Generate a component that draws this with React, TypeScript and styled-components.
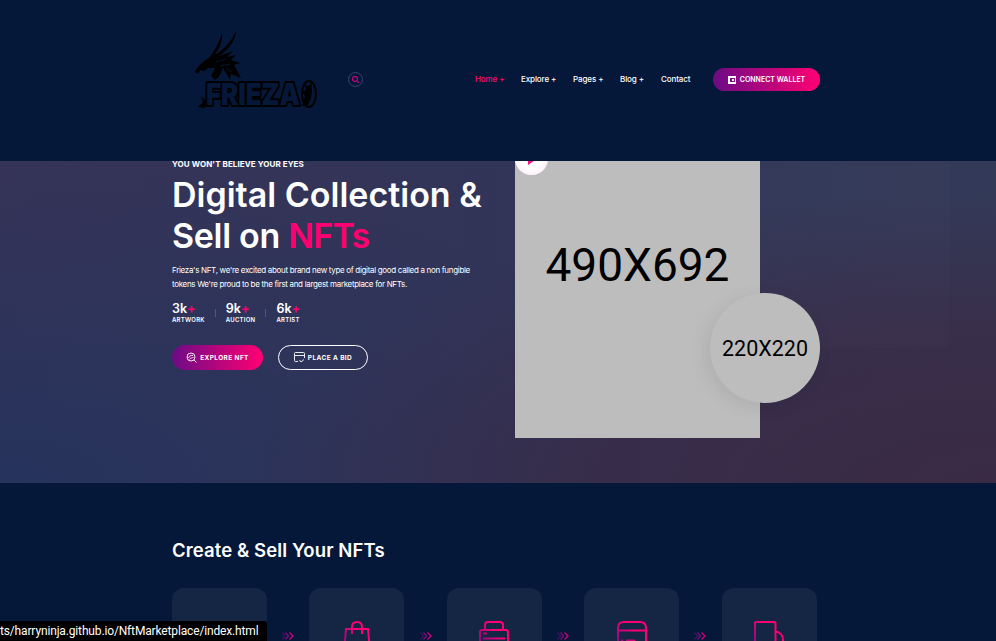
import styled, { createGlobalStyle } from 'styled-components'

const GlobalStyle = createGlobalStyle`
  html, body {
    margin: 0;
    height: 100%;
    overflow: hidden;
    background: #06183a;
    font-family: Inter, "Liberation Sans", sans-serif;
    color: #fff;
  }
`

const navLinks = [
  { label: 'Home +', active: true, width: 29 },
  { label: 'Explore +', width: 35 },
  { label: 'Pages +', width: 30 },
  { label: 'Blog +', width: 24 },
  { label: 'Contact', width: 28 },
]

const stats = [
  { value: '3k', label: 'ARTWORK' },
  { value: '9k', label: 'AUCTION' },
  { value: '6k', label: 'ARTIST' },
]

function Gradient({ id }: { id: string }) {
  return (
    <defs>
      <linearGradient id={id} gradientUnits="userSpaceOnUse" x1="0" y1="30" x2="30" y2="0">
        <stop offset="0" stopColor="#6c0b85" />
        <stop offset="0.65" stopColor="#ff0073" />
      </linearGradient>
    </defs>
  )
}

function Logo() {
  return (
    <LogoSvg viewBox="0 0 130 85" width="130" height="85">
      <g fill="#000">
        <path d="M5 42 C8 35 14 31 20 27 C24 20 28 16 32 3 C33 12 29 20 24 25 C34 20 41 12 46 1 C45 12 38 20 29 26 L43 21 L37 27 L46 25 L41 30 L50 33 L44 35 L51 48 L41 44 L40 50 L33 38 L29 47 L25 50 L21 46 L25 38 L18 38 L14 41 L10 40 L8 44 Z" />
        <path d="M8 77 L13 72 L11 66 L16 71 L15 78 Z" />
        <path d="M112 76 L115 66 L112 62 L116 60 L115 55 L119 56 L121 52 L122 60 L121 68 L118 75 Z" />
      </g>
      <LogoGap d="M26 32 L36 29 M30 36 L40 34 M36 38 L42 42" />
      <LogoRing cx="119" cy="64" rx="7" ry="13" />
      <LogoWord x="16" y="75" textLength="94" lengthAdjust="spacingAndGlyphs">FRIEZA</LogoWord>
    </LogoSvg>
  )
}

function WalletIcon() {
  return (
    <svg width="8" height="8" viewBox="0 0 8 8">
      <path d="M0 0H8V8H0Z M2 2V6H7V2Z" fill="#fff" fillRule="evenodd" />
      <rect x="4" y="3" width="2" height="2" fill="#fff" />
    </svg>
  )
}

function ExploreIcon() {
  return (
    <svg width="11" height="11" viewBox="0 0 11 11" fill="none" stroke="#fff" strokeWidth="0.9">
      <circle cx="5" cy="5" r="4" />
      <path d="M8 8L10.5 10.5" />
      <path d="M2.5 6C3 4 5 3 7 3.5" />
      <path d="M3.5 7.5C4.5 6 6 5.5 7.5 5.5" />
    </svg>
  )
}

function BidIcon() {
  return (
    <svg width="11" height="11" viewBox="0 0 11 11" fill="none" stroke="#fff" strokeWidth="0.9">
      <path d="M4 9.5H1.5C0.8 9.5 0.5 9.2 0.5 8.5V1.5C0.5 0.8 0.8 0.5 1.5 0.5H9.5C10.2 0.5 10.5 0.8 10.5 1.5V6" />
      <path d="M0.5 3.5H10.5" />
      <path d="M5.5 8L7 10L10 7.5" />
    </svg>
  )
}

function Chevrons() {
  return (
    <svg width="12" height="8" viewBox="0 0 12 8" fill="none" strokeWidth="1.3">
      <path d="M0.5 0.5L3.5 4L0.5 7.5" stroke="#3f1263" />
      <path d="M3.5 0.5L6.5 4L3.5 7.5" stroke="#7c0c74" />
      <path d="M7.5 0.5L11 4L7.5 7.5" stroke="#d6007a" />
    </svg>
  )
}

function BagIcon() {
  return (
    <svg width="30" height="30" viewBox="0 0 30 30" fill="none" stroke="url(#bag)" strokeWidth="2">
      <Gradient id="bag" />
      <path d="M4 8H26L28 30H2Z" />
      <path d="M10 13V6C10 2.500 12 1 15 1C18 1 20 2.500 20 6V13" />
    </svg>
  )
}

function PrinterIcon() {
  return (
    <svg width="30" height="30" viewBox="0 0 30 30" fill="none" stroke="url(#printer)" strokeWidth="2">
      <Gradient id="printer" />
      <path d="M6 9V4C6 2 7 1 9 1H21C23 1 24 2 24 4V9" />
      <path d="M3 9H27C28.500 9 29 10 29 11V30H1V11C1 10 1.500 9 3 9Z" />
      <path d="M4 12.500H8" />
      <path d="M4 17.500H26" />
    </svg>
  )
}

function WindowIcon() {
  return (
    <svg width="30" height="30" viewBox="0 0 30 30" fill="none" stroke="url(#window)" strokeWidth="2">
      <Gradient id="window" />
      <path d="M1 30V7C1 3 3 1 7 1H23C27 1 29 3 29 7V30" />
      <path d="M1 9.500H29" />
      <path d="M9 19.500H18" />
      <path d="M4 19.500H6" />
    </svg>
  )
}

function DeviceIcon() {
  return (
    <svg width="30" height="30" viewBox="0 0 30 30" fill="none" stroke="url(#device)" strokeWidth="2">
      <Gradient id="device" />
      <path d="M2 1H20C21 1 21.500 1.500 21.500 2.500V30H1V2C1 1.500 1.500 1 2 1Z" />
      <path d="M21.500 10.500C26 11 29 14.500 29 19V30H21.500" />
    </svg>
  )
}

const processIcons = [<BagIcon />, <PrinterIcon />, <WindowIcon />, <DeviceIcon />]

function App() {
  return (
    <Page>
      <GlobalStyle />
      <Header>
        <Logo />
        <SearchButton>
          <svg width="7" height="7" viewBox="0 0 7 7" fill="none" stroke="#d4007e" strokeWidth="1.1">
            <rect x="0.6" y="0.6" width="4.800" height="4.800" rx="1.800" />
            <path d="M4.800 4.800L6.700 6.700" />
          </svg>
        </SearchButton>
        <Nav>
          {navLinks.map((link) => (
            <NavLink key={link.label} $active={link.active} $width={link.width}>
              {link.label}
            </NavLink>
          ))}
        </Nav>
        <ConnectButton>
          <WalletIcon />
          CONNECT WALLET
        </ConnectButton>
      </Header>

      <Hero>
        <HeroCopy>
          <Eyebrow>YOU WON'T BELIEVE YOUR EYES</Eyebrow>
          <Title>
            Digital Collection &amp;
            <br />
            <TitleRest>Sell on <TitleAccent>NFTs</TitleAccent></TitleRest>
          </Title>
          <Lead>
            Frieza's NFT, we're excited about brand new type of digital good called a non fungible
            <br />
            tokens We're proud to be the first and largest marketplace for NFTs.
          </Lead>
          <Stats>
            {stats.map((stat, i) => (
              <StatGroup key={stat.label}>
                {i > 0 && <StatDivider />}
                <Stat>
                  <StatValue>
                    {stat.value}
                    <StatPlus>+</StatPlus>
                  </StatValue>
                  <StatLabel>{stat.label}</StatLabel>
                </Stat>
              </StatGroup>
            ))}
          </Stats>
          <Actions>
            <PrimaryButton>
              <ExploreIcon />
              EXPLORE NFT
            </PrimaryButton>
            <OutlineButton>
              <BidIcon />
              PLACE A BID
            </OutlineButton>
          </Actions>
        </HeroCopy>
        <HeroArt>
          <PlayButton>
            <PlayTriangle />
          </PlayButton>
          490X692
          <SmallArt>220X220</SmallArt>
        </HeroArt>
        <GlassPanel />
      </Hero>

      <Process>
        <ProcessTitle>Create &amp; Sell Your NFTs</ProcessTitle>
        <ProcessRow>
          <ProcessCard />
          {processIcons.map((icon, i) => (
            <ProcessStep key={i}>
              <ProcessArrow>
                <Chevrons />
              </ProcessArrow>
              <ProcessCard>{icon}</ProcessCard>
            </ProcessStep>
          ))}
        </ProcessRow>
      </Process>

      <StatusBubble>ts/harryninja.github.io/NftMarketplace/index.html</StatusBubble>
    </Page>
  )
}

export default App

const Page = styled.div`
  width: 996px;
  height: 641px;
  overflow: hidden;
  background: #06183a;
`

const Header = styled.header`
  position: relative;
  z-index: 3;
  height: 161px;
  box-sizing: border-box;
  padding: 0 176px 2px 190px;
  display: flex;
  align-items: center;
  background: #06183a;
`

const LogoSvg = styled.svg`
  flex: none;
  margin-bottom: 14px;
`

const LogoWord = styled.text`
  font-family: Inter, sans-serif;
  font-size: 30px;
  font-weight: 900;
  fill: #06183a;
  stroke: #000;
  stroke-width: 4px;
  stroke-linejoin: round;
  paint-order: stroke;
`

const LogoRing = styled.ellipse`
  fill: none;
  stroke: #000;
  stroke-width: 2px;
`

const LogoGap = styled.path`
  fill: none;
  stroke: #06183a;
  stroke-width: 0.8px;
`

const SearchButton = styled.div`
  flex: none;
  margin-left: 28px;
  width: 15px;
  height: 15px;
  box-sizing: border-box;
  border: 1px solid #37456a;
  border-radius: 50%;
  display: flex;
  align-items: center;
  justify-content: center;
`

const Nav = styled.nav`
  margin: 0 0 2px 112px;
  display: flex;
  gap: 17px;
`

const NavLink = styled.a<{ $active?: boolean; $width: number }>`
  width: ${(p) => p.$width}px;
  white-space: nowrap;
  font-size: 8px;
  font-weight: 500;
  line-height: 12px;
  letter-spacing: -0.1px;
  color: ${(p) => (p.$active ? '#ff0a6c' : '#fff')};
`

const ConnectButton = styled.button`
  margin-left: 24px;
  flex: none;
  width: 107px;
  height: 23px;
  border: 0;
  border-radius: 12px;
  padding: 0;
  display: flex;
  align-items: center;
  justify-content: center;
  gap: 4px;
  background: linear-gradient(90deg, #6c0b85, #ff0073);
  color: #fff;
  font-family: inherit;
  font-size: 7px;
  font-weight: 600;
`

const Hero = styled.section`
  position: relative;
  height: 322px;
  box-sizing: border-box;
  padding-left: 172px;
  display: flex;
  background:
    radial-gradient(ellipse 75% 90% at 100% 100%, #3a2a45 0%, rgba(58, 42, 69, 0.7) 55%, rgba(58, 42, 69, 0) 100%),
    radial-gradient(ellipse 70% 100% at 0% 100%, #26335c 0%, rgba(38, 51, 92, 0) 100%),
    linear-gradient(90deg, #363358 0%, #313558 55%, #333a58 100%);
`

const HeroCopy = styled.div`
  flex: none;
  width: 343px;
  position: relative;
  z-index: 1;
`

const Eyebrow = styled.div`
  margin-top: -2px;
  font-size: 8px;
  line-height: 10px;
  font-weight: 700;
  letter-spacing: 0.08px;
`

const Title = styled.h1`
  margin: 5px 0 0;
  font-size: 34px;
  line-height: 41px;
  font-weight: 600;
  white-space: nowrap;
`

const TitleRest = styled.span`
  letter-spacing: -0.3px;
`

const Accent = styled.span`
  color: #ff0070;
`

const TitleAccent = styled(Accent)`
  letter-spacing: -0.8px;
`

const Lead = styled.p`
  margin: 7px 0 0;
  font-size: 8px;
  line-height: 14px;
  font-weight: 400;
  letter-spacing: -0.32px;
  white-space: nowrap;
`

const Stats = styled.div`
  margin-top: 10px;
  display: flex;
`

const StatGroup = styled.div`
  display: flex;
  align-items: center;
`

const StatDivider = styled.div`
  width: 1px;
  height: 8px;
  margin: 0 10px;
  background: rgba(255, 255, 255, 0.18);
`

const Stat = styled.div`
  display: flex;
  flex-direction: column;
`

const StatValue = styled.div`
  font-size: 12.500px;
  line-height: 15px;
  font-weight: 600;
`

const StatPlus = styled(Accent)`
  font-weight: 700;
`

const StatLabel = styled.div`
  font-size: 6px;
  line-height: 8px;
  font-weight: 600;
  letter-spacing: 0.25px;
`

const Actions = styled.div`
  margin-top: 21px;
  display: flex;
  gap: 15px;
`

const PrimaryButton = styled.button`
  width: 91px;
  height: 25px;
  border: 0;
  border-radius: 13px;
  padding: 0;
  display: flex;
  align-items: center;
  justify-content: center;
  gap: 3px;
  background: linear-gradient(90deg, #6c0b85, #ff0073);
  color: #fff;
  font-family: inherit;
  font-size: 6.500px;
  font-weight: 700;
  letter-spacing: 0.4px;
`

const OutlineButton = styled(PrimaryButton)`
  width: 90px;
  border: 1px solid #fff;
  background: transparent;
`

const HeroArt = styled.div`
  position: relative;
  flex: none;
  width: 245px;
  height: 346px;
  margin-top: -69px;
  background: #bdbdbd;
  color: #000;
  font-family: Roboto, sans-serif;
  font-size: 46px;
  display: flex;
  align-items: center;
  justify-content: center;
  z-index: 1;
`

const PlayButton = styled.div`
  position: absolute;
  left: 0;
  top: 50px;
  width: 33px;
  height: 33px;
  border-radius: 50%;
  background: #fff;
  box-shadow: inset 0 0 8px #ffe6f3;
`

const PlayTriangle = styled.div`
  position: absolute;
  left: 13px;
  top: 9px;
  width: 0;
  height: 0;
  border-left: 10px solid #ff0a80;
  border-top: 7px solid transparent;
  border-bottom: 7px solid transparent;
`

const SmallArt = styled.div`
  position: absolute;
  left: 195px;
  top: 201px;
  width: 110px;
  height: 110px;
  border-radius: 50%;
  background: #bdbdbd;
  box-shadow: -4px 4px 18px rgba(0, 0, 0, 0.08);
  font-size: 21.500px;
  display: flex;
  align-items: center;
  justify-content: center;
`

const GlassPanel = styled.div`
  position: absolute;
  right: 47px;
  top: 0;
  width: 300px;
  height: 187px;
  border-bottom-right-radius: 6px;
  background: rgba(255, 255, 255, 0.01);
`

const Process = styled.section`
  padding: 56px 0 0 172px;
`

const ProcessTitle = styled.h2`
  margin: 0;
  font-size: 18.500px;
  line-height: 22px;
  font-weight: 600;
  letter-spacing: 0.1px;
`

const ProcessRow = styled.div`
  margin-top: 27px;
  display: flex;
`

const ProcessStep = styled.div`
  display: flex;
`

const ProcessCard = styled.div`
  flex: none;
  width: 95px;
  height: 120px;
  box-sizing: border-box;
  padding-top: 33px;
  border-radius: 12px;
  background: #152544;
  display: flex;
  justify-content: center;
  align-items: flex-start;
`

const ProcessArrow = styled.div`
  flex: none;
  width: 42.400px;
  padding-top: 44px;
  box-sizing: border-box;
  display: flex;
  justify-content: center;
`

const StatusBubble = styled.div`
  position: fixed;
  left: 0;
  bottom: 0;
  width: 267px;
  height: 20px;
  box-sizing: border-box;
  padding-top: 2px;
  background: #000;
  border-top-right-radius: 3px;
  color: #fff;
  font-family: Roboto, sans-serif;
  font-size: 12px;
  line-height: 17px;
  letter-spacing: -0.15px;
  white-space: nowrap;
  overflow: hidden;
  z-index: 5;
`
